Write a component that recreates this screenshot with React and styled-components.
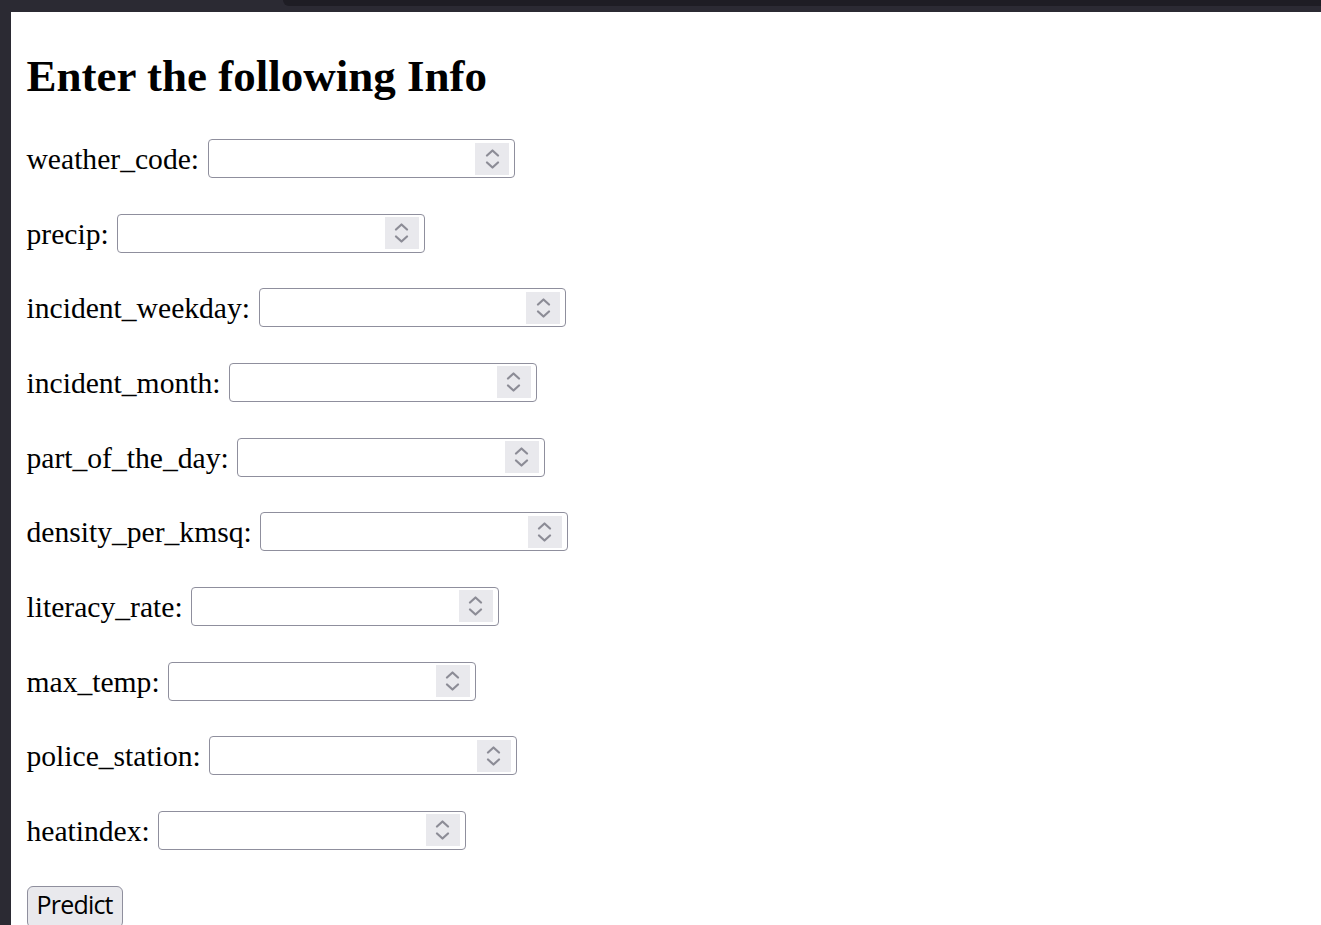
import styled, { createGlobalStyle } from "styled-components";

const GlobalStyle = createGlobalStyle`
  html, body {
    margin: 0;
    padding: 0;
    background: #2b2a33;
  }
  body {
    font-family: "Liberation Serif", "Times New Roman", serif;
    overflow: hidden;
  }
`;

const fields = [
  "weather_code",
  "precip",
  "incident_weekday",
  "incident_month",
  "part_of_the_day",
  "density_per_kmsq",
  "literacy_rate",
  "max_temp",
  "police_station",
  "heatindex",
];

const Window = styled.div`
  display: flex;
  flex-direction: column;
  width: 1321px;
  height: 925px;
`;

const TopBar = styled.div`
  display: flex;
  height: 12px;
  background: #2b2a33;
`;

const TopSpacer = styled.div`
  width: 283px;
`;

const TopTab = styled.div`
  flex: 1;
  height: 6px;
  background: #1e1d24;
  border-bottom-left-radius: 6px;
`;

const Body = styled.div`
  display: flex;
  flex: 1;
  min-height: 0;
`;

const SideStrip = styled.div`
  width: 11px;
  background: #2b2a33;
`;

const Page = styled.main`
  flex: 1;
  background: #fff;
  padding: 0 0 0 15.5px;
  overflow: hidden;
`;

const Heading = styled.h1`
  margin: 37.5px 0 0;
  font-family: "Liberation Serif", "Times New Roman", serif;
  font-weight: 700;
  font-size: 45px;
  line-height: 52px;
  color: #000;
`;

const Form = styled.form`
  display: flex;
  flex-direction: column;
  align-items: flex-start;
  gap: 35.67px;
  margin-top: 37.5px;
`;

const Row = styled.div`
  display: flex;
  align-items: center;
  gap: 8.5px;
  height: 39px;
`;

const Label = styled.label`
  font-family: "Liberation Serif", "Times New Roman", serif;
  font-size: 29.6px;
  color: #000;
  margin-top: 2px;
  white-space: nowrap;
`;

const NumberBox = styled.div`
  display: flex;
  align-items: center;
  box-sizing: border-box;
  width: 307.5px;
  height: 39px;
  border: 1px solid #8f8f9d;
  border-radius: 4px;
  background: #fff;
  padding-right: 5px;
`;

const NumberInput = styled.input`
  flex: 1;
  min-width: 0;
  height: 100%;
  border: none;
  outline: none;
  background: transparent;
  padding: 0 6px;
  font-family: "Liberation Sans", Arial, sans-serif;
  font-size: 24px;
`;

const Spinner = styled.div`
  display: flex;
  flex-direction: column;
  align-items: center;
  justify-content: center;
  gap: 4px;
  width: 34px;
  height: 32px;
  background: #e9e9ed;
`;

const Chevron = ({ down }) => (
  <svg width="15" height="8" viewBox="0 0 15 8" fill="none">
    <path
      d={down ? "M2 1.5 L7.5 6.5 L13 1.5" : "M2 6.5 L7.5 1.5 L13 6.5"}
      stroke="#8c8c96"
      strokeWidth="2.2"
      strokeLinecap="round"
      strokeLinejoin="round"
    />
  </svg>
);

const PredictButton = styled.button`
  box-sizing: border-box;
  height: 42px;
  padding: 0 9px 4px;
  background: #e9e9ed;
  border: 1px solid #8f8f9d;
  border-radius: 6px;
  font-family: "Open Sans", "Noto Sans", sans-serif;
  font-size: 25px;
  letter-spacing: -0.8px;
  line-height: 33px;
  color: #000;
`;

export default function App() {
  return (
    <>
      <GlobalStyle />
      <Window>
        <TopBar>
          <TopSpacer />
          <TopTab />
        </TopBar>
        <Body>
          <SideStrip />
          <Page>
            <Heading>Enter the following Info</Heading>
            <Form onSubmit={(e) => e.preventDefault()}>
              {fields.map((name) => (
                <Row key={name}>
                  <Label htmlFor={name}>{name}:</Label>
                  <NumberBox>
                    <NumberInput id={name} name={name} type="text" inputMode="decimal" />
                    <Spinner>
                      <Chevron />
                      <Chevron down />
                    </Spinner>
                  </NumberBox>
                </Row>
              ))}
              <PredictButton type="submit">Predict</PredictButton>
            </Form>
          </Page>
        </Body>
      </Window>
    </>
  );
}
